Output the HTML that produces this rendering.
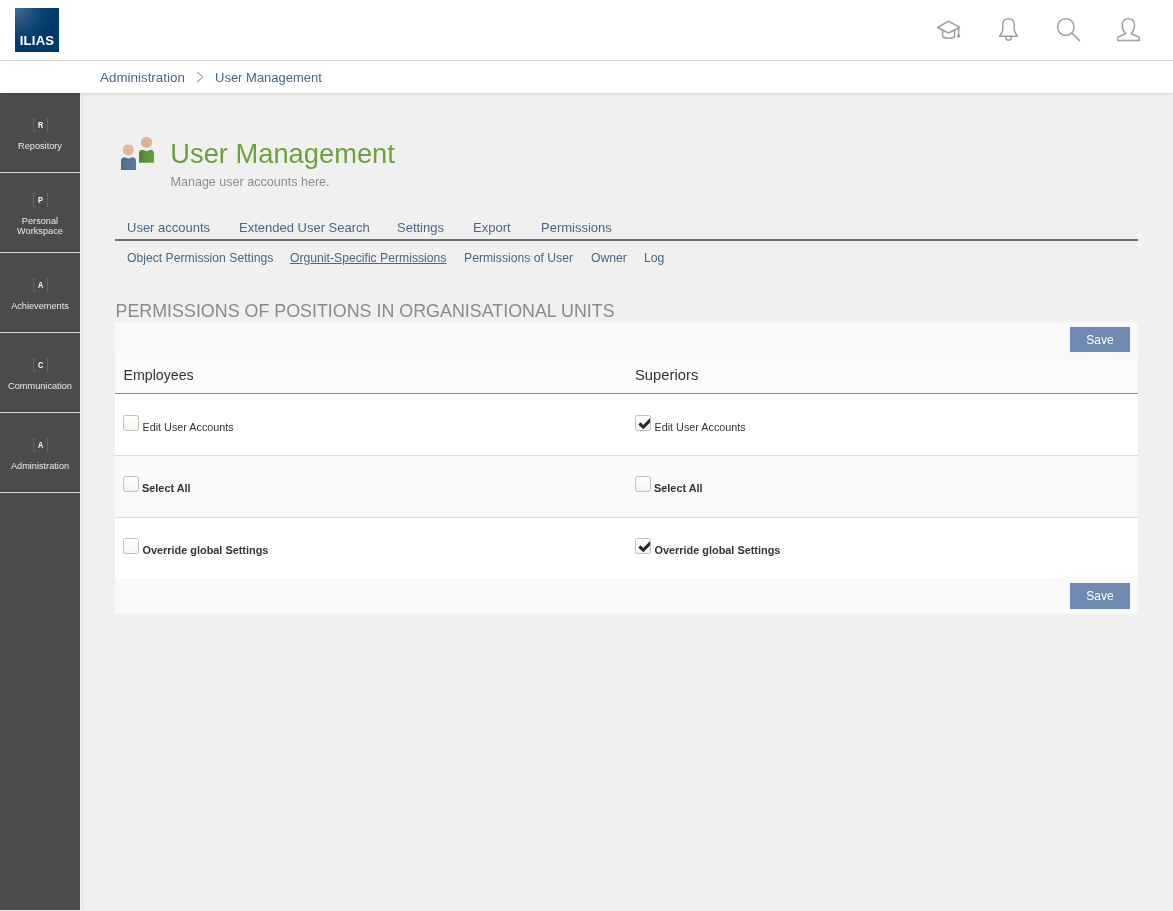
<!DOCTYPE html>
<html><head><meta charset="utf-8">
<style>
*{box-sizing:border-box;margin:0;padding:0}
html,body{width:1173px;height:911px;overflow:hidden}
body{background:#f0f0f0;font-family:"Liberation Sans",sans-serif;position:relative;-webkit-font-smoothing:antialiased}
#wrap{position:absolute;left:0;top:0;width:1173px;height:911px;will-change:transform}
.a{position:absolute;white-space:nowrap}
#hdr{position:absolute;left:0;top:0;width:1173px;height:61px;background:#fff;border-bottom:1px solid #dcdcdc}
#logo{position:absolute;left:15px;top:8px;width:44px;height:44px;background:radial-gradient(circle at 0 0,#4d6d93 0,#2a5580 22%,#0a4272 45%,#003a69 62%,#003a69 100%)}
#logo span{position:absolute;left:0;width:44px;text-align:center;top:26px;font-weight:bold;font-size:13.1px;color:#fff;line-height:14px;letter-spacing:0.2px}
#bc{position:absolute;left:0;top:61px;width:1173px;height:32px;background:#fff;box-shadow:0 1px 3px rgba(0,0,0,0.12);z-index:2}
.lnk{color:#4c6586}
#side{position:absolute;left:0;top:93px;width:80px;height:817px;background:#4b4b4b;box-shadow:1px 0 0 #f3f3f3,3px 0 3px rgba(0,0,0,0.06)}
.si{position:absolute;left:0;width:80px;height:80px;border-bottom:1px solid #dedede}
.br{position:absolute;left:33px;width:15px;height:14px;border:1px solid #656565}
.br::before{content:"";position:absolute;left:1.5px;top:-1px;width:10px;height:14px;background:#4b4b4b}
.br b{position:absolute;left:-0.5px;top:0;width:13px;text-align:center;color:#fff;font-size:8.8px;line-height:12.5px;font-weight:bold;z-index:1;transform:scaleX(0.82)}
.sl{position:absolute;left:0;width:80px;text-align:center;color:#eaeaea;font-size:9.2px;line-height:10px;white-space:nowrap}
.tab{position:absolute;top:220px;font-size:13px;color:#4c6586;white-space:nowrap;line-height:16px}
.stab{position:absolute;top:251px;font-size:12.2px;color:#4c6586;white-space:nowrap;line-height:15px}
#tbl{position:absolute;left:115px;top:322px;width:1023px;height:292px;background:#f9f9f9}
.row{position:absolute;left:0;width:1023px}
.btn{position:absolute;left:955px;width:60px;height:25px;background:#6f8ab0;color:#fff;font-size:12px;line-height:26px;text-align:center}
.cb{position:absolute;width:16px;height:16px;border:1px solid #c6bfb8;border-radius:2.5px;background:linear-gradient(#fff,#f6f4f2)}
.ct{position:absolute;font-size:10.8px;color:#333;white-space:nowrap;line-height:13px}
.ct.bd{font-weight:bold;font-size:10.9px}
.chk{position:absolute;left:2px;top:1px}
</style></head><body><div id="wrap">
<div id="hdr">
  <div id="logo"><span>ILIAS</span></div>
  <svg class="a" style="left:930px;top:10px" width="220" height="40" viewBox="930 10 220 40" fill="none" stroke="#a0a0a0" stroke-width="1.5" stroke-linejoin="round" stroke-linecap="round">
    <path d="M937.5 27.5 L948.5 21.2 L959.6 27.5 L948.5 33 Z"/>
    <path d="M942.6 30 V37 Q948.5 39.3 954.6 37 V30"/>
    <path d="M958.6 27.8 V35.5"/><circle cx="958.6" cy="36" r="0.9" fill="#9a9a9a"/>
    <path d="M999.6 36.3 H1017.4 L1014.6 31.5 Q1014.2 30.5 1014.2 29 V24.5 Q1014.2 18.7 1008.5 18.7 Q1002.8 18.7 1002.8 24.5 V29 Q1002.8 30.5 1002.4 31.5 Z"/>
    <path d="M1005.6 36.5 Q1005.6 40.3 1008.5 40.3 Q1011.4 40.3 1011.4 36.5"/>
    <circle cx="1065.8" cy="27" r="8.3"/>
    <path d="M1072.2 33.4 L1079.5 40.6"/>
    <path d="M1128.4 18.7 Q1122.3 18.7 1122.3 25 Q1122.3 30.5 1125.5 33 L1125.3 33.8 L1118.8 36.7 Q1117.6 37.3 1117.6 38.5 V40.5 H1139.4 V38.5 Q1139.4 37.3 1138.2 36.7 L1131.5 33.8 L1131.3 33 Q1134.5 30.5 1134.5 25 Q1134.5 18.7 1128.4 18.7 Z"/>
  </svg>
</div>
<div id="bc">
  <div class="a lnk" style="left:100px;top:9px;font-size:13.4px;line-height:16px">Administration</div>
  <svg class="a" style="left:194px;top:10px" width="12" height="12" viewBox="0 0 12 12" fill="none" stroke="#aaa" stroke-width="1.1"><path d="M3 1 L9 6 L3 11"/></svg>
  <div class="a lnk" style="left:215px;top:9px;font-size:13px;line-height:16px">User Management</div>
</div>
<div id="side">
  <div class="si" style="top:0"><div class="br" style="top:25px"><b>R</b></div><div class="sl" style="top:48px">Repository</div></div>
  <div class="si" style="top:80px"><div class="br" style="top:20px"><b>P</b></div><div class="sl" style="top:43px">Personal<br>Workspace</div></div>
  <div class="si" style="top:160px"><div class="br" style="top:25px"><b>A</b></div><div class="sl" style="top:48px">Achievements</div></div>
  <div class="si" style="top:240px"><div class="br" style="top:25px"><b>C</b></div><div class="sl" style="top:48px">Communication</div></div>
  <div class="si" style="top:320px"><div class="br" style="top:25px"><b>A</b></div><div class="sl" style="top:48px">Administration</div></div>
</div>

<svg class="a" style="left:115px;top:130px" width="45" height="45" viewBox="115 130 45 45">
  <defs>
    <linearGradient id="gb" x1="0" x2="1"><stop offset="0" stop-color="#4d6a90"/><stop offset="1" stop-color="#5d7ca5"/></linearGradient>
    <linearGradient id="gg" x1="0" x2="1"><stop offset="0" stop-color="#4b8536"/><stop offset="1" stop-color="#6aa23e"/></linearGradient>
  </defs>
  <circle cx="146.6" cy="142.4" r="5.6" fill="#ddb292"/>
  <path d="M139 162.7 V153.5 Q139 150 142.5 149.8 L146.6 151.2 L150.5 149.8 Q154.1 150 154.1 153.5 V162.7 Z" fill="url(#gg)"/>
  <circle cx="128.2" cy="150" r="5.6" fill="#e3b896"/>
  <path d="M121 169.9 V161 Q121 157.5 124.5 157.2 L128.3 158.6 L132.2 157.2 Q136 157.5 136 161 V169.9 Z" fill="url(#gb)"/>
</svg>
<div class="a" style="left:170.3px;top:138px;font-size:27.3px;line-height:32px;color:#6ea03c">User Management</div>
<div class="a" style="left:170.5px;top:175px;font-size:12.55px;line-height:15px;color:#8c8c8c">Manage user accounts here.</div>

<div class="tab" style="left:127px">User accounts</div>
<div class="tab" style="left:239px">Extended User Search</div>
<div class="tab" style="left:397px">Settings</div>
<div class="tab" style="left:473px">Export</div>
<div class="tab" style="left:541px">Permissions</div>
<div class="a" style="left:115px;top:239px;width:1023px;height:2px;background:#6e6e6e"></div>

<div class="stab" style="left:127px">Object Permission Settings</div>
<div class="stab" style="left:290px;text-decoration:underline">Orgunit-Specific Permissions</div>
<div class="stab" style="left:464px">Permissions of User</div>
<div class="stab" style="left:591px">Owner</div>
<div class="stab" style="left:644px">Log</div>

<div class="a" style="left:115.5px;top:300px;font-size:17.86px;line-height:22px;color:#8a8a8a">PERMISSIONS OF POSITIONS IN ORGANISATIONAL UNITS</div>

<div id="tbl">
  <div class="row" style="top:0;height:35px;background:#f9f9f9"><div class="btn" style="top:5px">Save</div></div>
  <div class="row" style="top:35px;height:37px;background:#fbfbfb;border-bottom:1px solid #8a8a8a">
    <div class="a" style="left:8.5px;top:10px;font-size:14.2px;line-height:17px;color:#333">Employees</div>
    <div class="a" style="left:520px;top:10px;font-size:14.8px;line-height:17px;color:#333">Superiors</div>
  </div>
  <div class="row" style="top:72px;height:62px;background:#fff;border-bottom:1px solid #dcdcdc">
    <div class="cb" style="left:8px;top:21px"></div><div class="ct" style="left:27.5px;top:27px">Edit User Accounts</div>
    <div class="cb" style="left:520px;top:21px"><svg class="chk" width="12" height="13" viewBox="0 0 12 13"><path d="M1.4 6.4 L5.3 10.1 L13 2.4" fill="none" stroke="#222a30" stroke-width="3.1"/></svg></div><div class="ct" style="left:539.5px;top:27px">Edit User Accounts</div>
  </div>
  <div class="row" style="top:134px;height:62px;background:#f9f9f9;border-bottom:1px solid #dcdcdc">
    <div class="cb" style="left:8px;top:20px"></div><div class="ct bd" style="left:27px;top:26px">Select All</div>
    <div class="cb" style="left:520px;top:20px"></div><div class="ct bd" style="left:539px;top:26px">Select All</div>
  </div>
  <div class="row" style="top:196px;height:60px;background:#fff">
    <div class="cb" style="left:8px;top:20px"></div><div class="ct bd" style="left:27.5px;top:26px">Override global Settings</div>
    <div class="cb" style="left:520px;top:20px"><svg class="chk" width="12" height="13" viewBox="0 0 12 13"><path d="M1.4 6.4 L5.3 10.1 L13 2.4" fill="none" stroke="#222a30" stroke-width="3.1"/></svg></div><div class="ct bd" style="left:539.5px;top:26px">Override global Settings</div>
  </div>
  <div class="row" style="top:256px;height:36px;background:#f9f9f9"><div class="btn" style="top:5px;height:26px;line-height:27px">Save</div></div>
</div>
</div></body></html>
